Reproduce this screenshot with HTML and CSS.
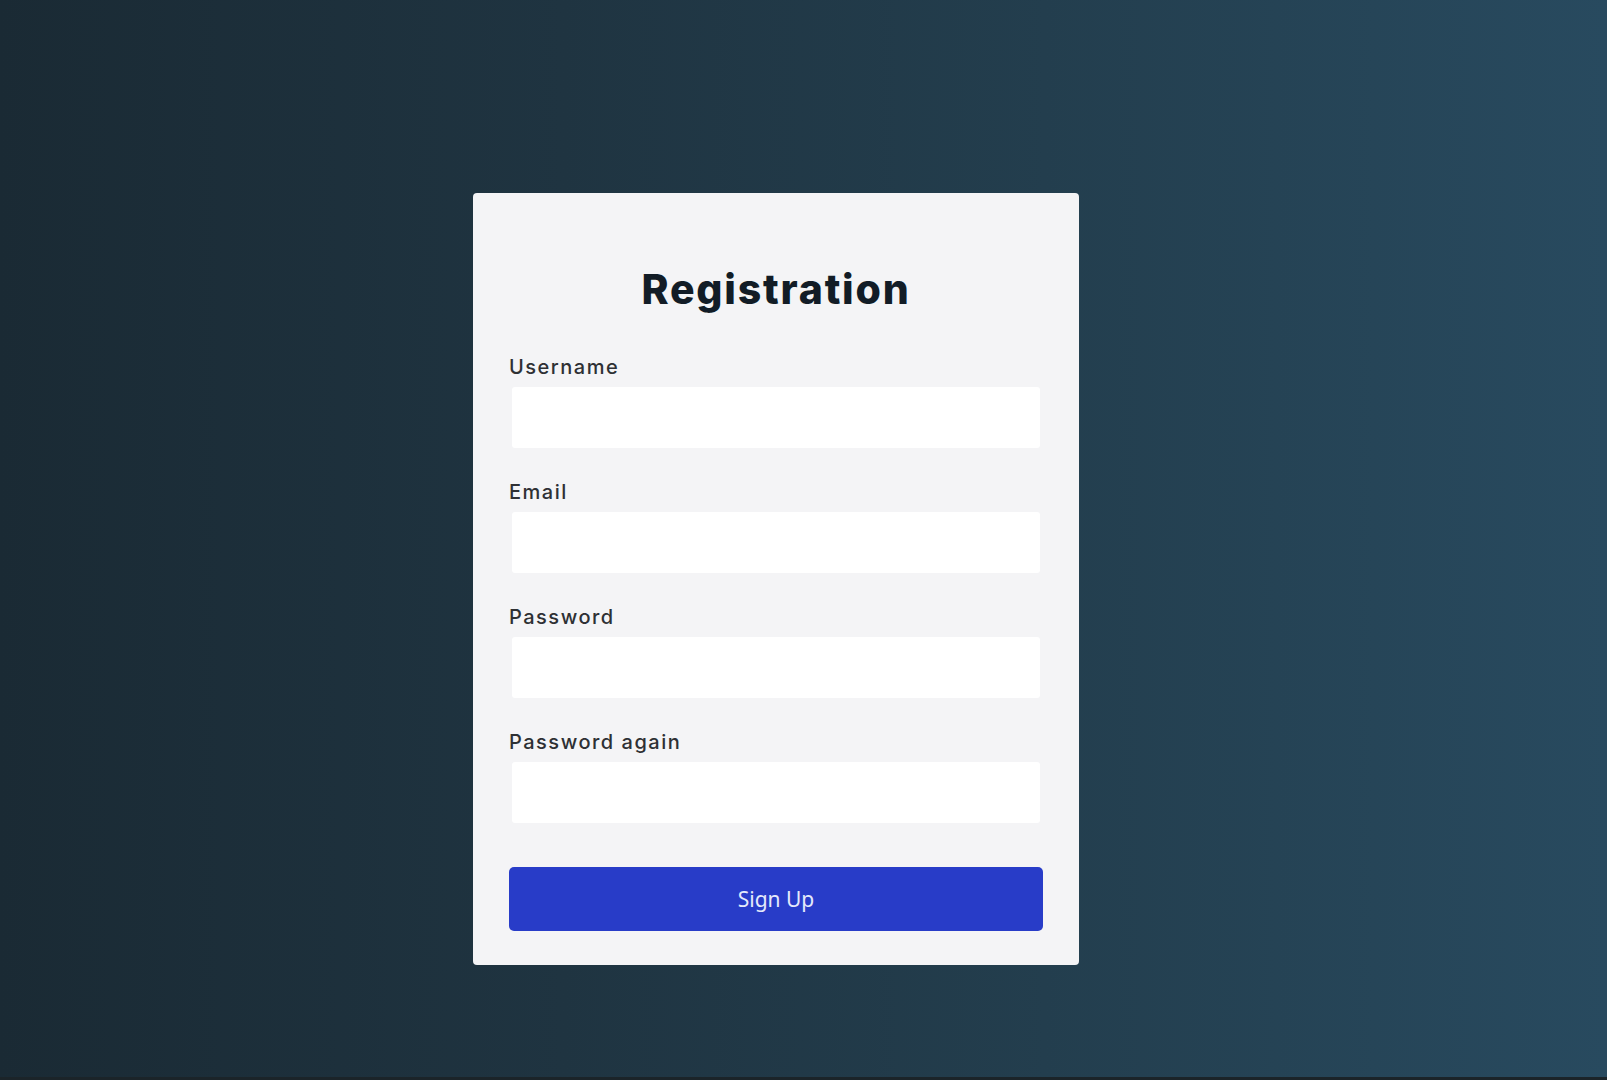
FILE: index.html
```html
<!DOCTYPE html>
<html lang="en">
<head>
<meta charset="utf-8">
<title>Registration</title>
<link rel="stylesheet" href="styles.css">
</head>
<body>
  <main class="page">
    <form class="card">
      <h1 class="title">Registration</h1>
      <div class="field">
        <label class="label" for="username">Username</label>
        <input class="input" id="username" type="text">
      </div>
      <div class="field">
        <label class="label" for="email">Email</label>
        <input class="input" id="email" type="email">
      </div>
      <div class="field">
        <label class="label" for="password">Password</label>
        <input class="input" id="password" type="password">
      </div>
      <div class="field">
        <label class="label" for="password2">Password again</label>
        <input class="input" id="password2" type="password">
      </div>
      <button class="btn" type="button">Sign Up</button>
    </form>
  </main>
</body>
</html>
```
FILE: styles.css
```css
* { box-sizing: border-box; }
html, body { margin: 0; padding: 0; }
body {
  width: 1607px;
  height: 1080px;
  overflow: hidden;
  background: linear-gradient(to right, #1a2a34 0%, #1f3441 35%, #233e4e 65%, #284a5f 100%);
  border-bottom: 3px solid #1b2429;
}
.page {
  display: flex;
  justify-content: center;
  padding: 193px 55px 0 0;
}
.card {
  width: 606px;
  background: #f4f4f6;
  border-radius: 4px;
  padding: 72px 36px 34px;
  display: flex;
  flex-direction: column;
}
.title {
  margin: 0;
  font-family: Inter, "Noto Sans", sans-serif;
  font-weight: 800;
  font-size: 41px;
  line-height: 48px;
  letter-spacing: 1.8px;
  color: #121c26;
  text-align: center;
}
.field {
  display: flex;
  flex-direction: column;
  margin-top: 32px;
}
.field:first-of-type { margin-top: 42px; }
.label {
  font-family: Inter, "Noto Sans", sans-serif;
  font-weight: 500;
  font-size: 20px;
  line-height: 24px;
  letter-spacing: 1.5px;
  color: #2e3034;
  margin-bottom: 8px;
}
.input {
  height: 61px;
  margin: 0 3px;
  border: none;
  border-radius: 3px;
  background: #ffffff;
  outline: none;
}
.btn {
  margin-top: 44px;
  height: 64px;
  border: none;
  border-radius: 5px;
  background: #283cc8;
  color: #e4e9fb;
  font-family: "Noto Sans", sans-serif;
  font-size: 21px;
  cursor: pointer;
}
```
